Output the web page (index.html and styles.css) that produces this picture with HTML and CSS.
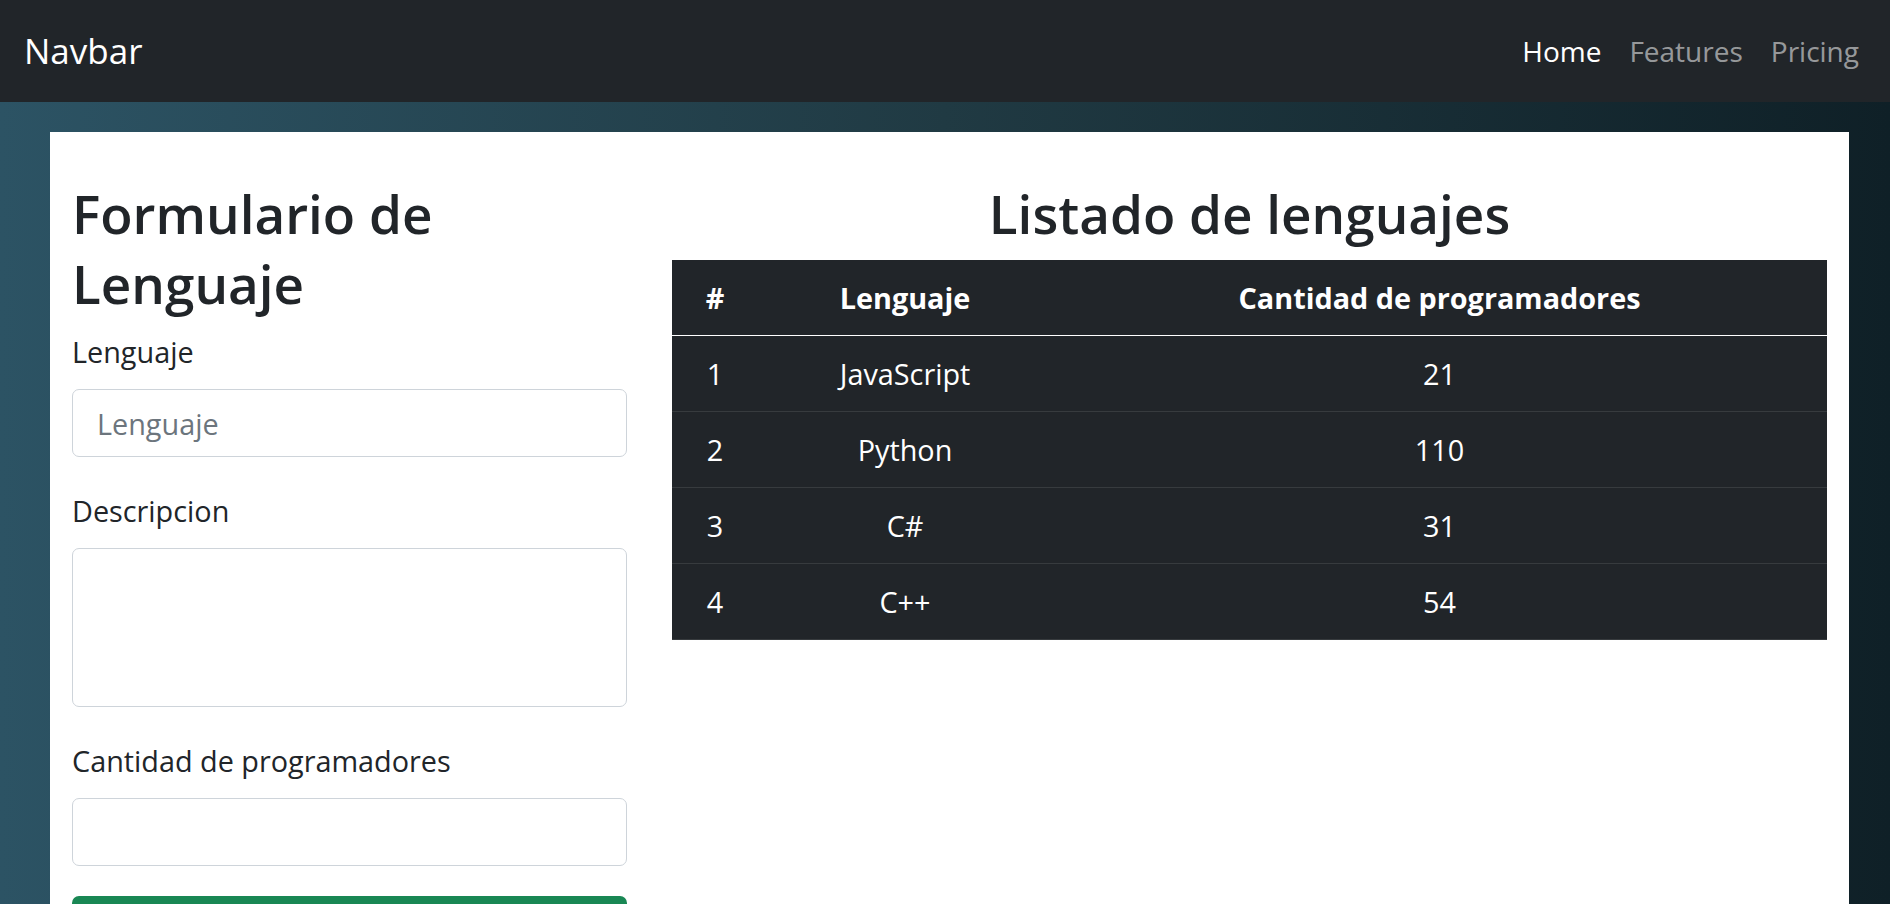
FILE: index.html
```html
<!DOCTYPE html>
<html lang="es">
<head>
<meta charset="utf-8">
<title>Lenguajes</title>
<link rel="stylesheet" href="styles.css">
</head>
<body>
<nav class="navbar">
  <a class="brand" href="#">Navbar</a>
  <ul class="nav">
    <li><a class="nav-link active" href="#">Home</a></li>
    <li><a class="nav-link" href="#">Features</a></li>
    <li><a class="nav-link" href="#">Pricing</a></li>
  </ul>
</nav>
<main class="page">
  <section class="card">
    <div class="form-col">
      <h2 class="heading">Formulario de Lenguaje</h2>
      <form class="form">
        <div class="group">
          <label class="label" for="lenguaje">Lenguaje</label>
          <input class="control" id="lenguaje" type="text" placeholder="Lenguaje">
        </div>
        <div class="group">
          <label class="label" for="descripcion">Descripcion</label>
          <textarea class="control area" id="descripcion" rows="3"></textarea>
        </div>
        <div class="group last">
          <label class="label" for="cantidad">Cantidad de programadores</label>
          <input class="control" id="cantidad" type="number">
        </div>
        <button class="btn" type="button" aria-label="Guardar"></button>
      </form>
    </div>
    <div class="list-col">
      <h2 class="heading center">Listado de lenguajes</h2>
      <table class="table">
        <thead>
          <tr><th class="c1">#</th><th class="c2">Lenguaje</th><th class="c3">Cantidad de programadores</th></tr>
        </thead>
        <tbody>
          <tr><td>1</td><td>JavaScript</td><td>21</td></tr>
          <tr><td>2</td><td>Python</td><td>110</td></tr>
          <tr><td>3</td><td>C#</td><td>31</td></tr>
          <tr><td>4</td><td>C++</td><td>54</td></tr>
        </tbody>
      </table>
    </div>
  </section>
</main>
</body>
</html>
```
FILE: styles.css
```css
* { box-sizing: border-box; }

html, body {
  margin: 0;
  height: 904px;
  overflow: hidden;
}

body {
  font-family: "Open Sans", "Noto Sans", sans-serif;
  color: #212529;
  background: linear-gradient(to right, #2c5364, #203a43, #0f2027);
}

.navbar {
  height: 102px;
  background: #212529;
  display: flex;
  align-items: center;
  justify-content: space-between;
  padding: 0 17px 0 24px;
}

.brand {
  font-size: 35px;
  line-height: 54px;
  color: #fff;
  text-decoration: none;
}

.nav {
  list-style: none;
  margin: 0;
  padding: 0;
  display: flex;
}

.nav-link {
  display: block;
  font-size: 28px;
  line-height: 42px;
  padding: 0 14px;
  color: rgba(255, 255, 255, 0.55);
  text-decoration: none;
}

.nav-link.active { color: #fff; }

.page {
  padding: 30px 41px 0 50px;
}

.card {
  background: #fff;
  padding: 47px 22px 60px 22px;
  display: grid;
  grid-template-columns: 555fr 1155fr;
  column-gap: 45px;
  align-items: start;
}

.heading {
  font-size: 53px;
  font-weight: 600;
  line-height: 70px;
  margin: 0 0 11px;
}

.center { text-align: center; }

.form { display: flex; flex-direction: column; }

.group {
  display: flex;
  flex-direction: column;
  margin-bottom: 32px;
}

.group.last { margin-bottom: 30px; }

.label {
  font-size: 28.8px;
  line-height: 43px;
  margin-bottom: 16px;
}

.control {
  font-family: inherit;
  font-size: 28.8px;
  height: 68px;
  padding: 0 24px;
  border: 1px solid #ced4da;
  border-radius: 7px;
  color: #212529;
  background: #fff;
}

.control::placeholder { color: #6c757d; }

.area {
  height: 159px;
  padding: 12px 24px;
  resize: none;
}

.btn {
  height: 68px;
  border: none;
  border-radius: 7px;
  background: #198754;
}

.table {
  width: 100%;
  border-collapse: collapse;
  background: #212529;
  color: #fff;
  font-size: 28.8px;
  line-height: 43px;
  text-align: center;
}

.table th, .table td {
  padding: 16px 8px;
  border-bottom: 1px solid #373b3e;
}

.table th {
  font-weight: 700;
  border-bottom-color: #fff;
}

.c1 { width: 86px; }
.c2 { width: 294px; }
```
